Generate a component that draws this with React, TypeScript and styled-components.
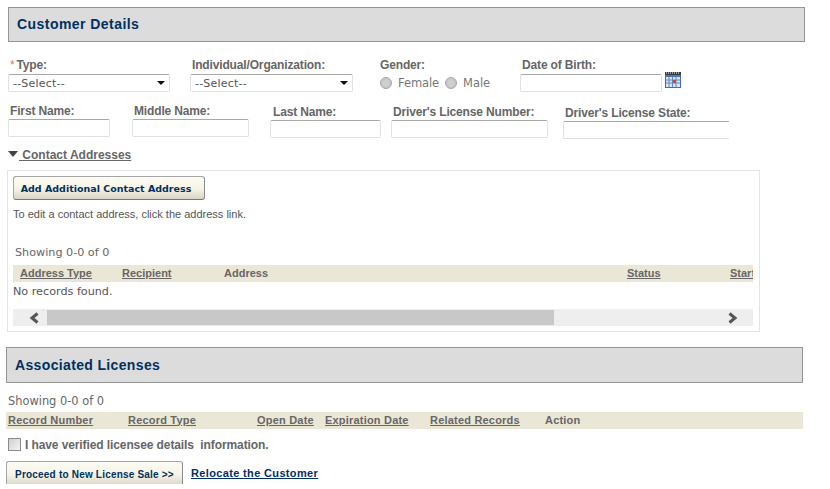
import styled, { createGlobalStyle } from "styled-components";

const GlobalStyle = createGlobalStyle`
  html, body {
    margin: 0;
    background: #fff;
    font-family: "Liberation Sans", Arial, sans-serif;
  }
`;

const Page = styled.div`
  width: 830px;
  height: 484px;
  overflow: hidden;
  padding-top: 7px;
  box-sizing: border-box;
`;

const SectionBar = styled.div<{ $left: number; $width: number; $height: number; $pad: number; $lift?: number }>`
  box-sizing: border-box;
  margin-left: ${(p) => p.$left}px;
  width: ${(p) => p.$width}px;
  height: ${(p) => p.$height}px;
  padding-left: ${(p) => p.$pad}px;
  padding-bottom: ${(p) => p.$lift ?? 0}px;
  display: flex;
  align-items: center;
  background: #dcdcdc;
  border: 1px solid #959595;
`;

const SectionTitle = styled.h2<{ $spacing: number }>`
  margin: 0;
  color: #00305f;
  font-size: 14px;
  font-weight: bold;
  letter-spacing: ${(p) => p.$spacing}px;
`;

const FieldRow = styled.div<{ $top: number; $height: number }>`
  display: flex;
  align-items: flex-start;
  margin-top: ${(p) => p.$top}px;
  height: ${(p) => p.$height}px;
  padding-left: 8px;
`;

const Field = styled.div<{ $width: number; $gap: number; $drop?: number }>`
  flex: none;
  width: ${(p) => p.$width}px;
  margin-right: ${(p) => p.$gap}px;
  padding-top: ${(p) => p.$drop ?? 0}px;
`;

const Label = styled.label<{ $indent?: number }>`
  display: block;
  height: 15px;
  line-height: 15px;
  margin-left: ${(p) => p.$indent ?? 1}px;
  color: #666;
  font-size: 12px;
  font-weight: bold;
  letter-spacing: -0.15px;
  white-space: nowrap;
`;

const Star = styled.span`
  color: #d9822b;
  font-weight: normal;
  margin-right: 2px;
`;

const SelectWrap = styled.div`
  position: relative;
  height: 18px;
  margin-top: 1px;
  &::after {
    content: "";
    position: absolute;
    right: 5px;
    top: 7px;
    border-left: 4px solid transparent;
    border-right: 4px solid transparent;
    border-top: 4px solid #111;
  }
`;

const Select = styled.select`
  appearance: none;
  box-sizing: border-box;
  display: block;
  width: 100%;
  height: 18px;
  margin: 0;
  padding: 0 0 0 4px;
  background: #fff;
  border: 1px solid #dfe1e8;
  border-top-color: #a9a9a9;
  border-radius: 2px;
  color: #555;
  font-family: "DejaVu Sans", Verdana, sans-serif;
  font-size: 11px;
  letter-spacing: 0.2px;
`;

const TextInput = styled.input`
  box-sizing: border-box;
  display: block;
  width: 100%;
  height: 18px;
  margin: 0;
  padding: 0;
  background: #fff;
  border: 1px solid #dfe1e8;
  border-top-color: #a9a9a9;
  border-radius: 2px;
`;

const ClippedInput = styled(TextInput)`
  border-right: 0;
  border-radius: 2px 0 0 2px;
`;

const RadioRow = styled.div`
  display: flex;
  align-items: center;
  height: 18px;
  margin-top: 1px;
  color: #777;
  font-family: "DejaVu Sans", Verdana, sans-serif;
  font-size: 11.5px;
  letter-spacing: -0.08px;
`;

const Radio = styled.input`
  appearance: none;
  flex: none;
  box-sizing: border-box;
  width: 12px;
  height: 12px;
  margin: 0 6px 0 0;
  border: 1px solid #a5a5a5;
  border-radius: 50%;
  background: radial-gradient(circle at 50% 55%, #cfcfcf 0 40%, #c4c4c4 60%, #f2f2f2 100%);
`;

const RadioText = styled.span`
  margin-right: 6px;
`;

const DateRow = styled.div`
  position: relative;
  width: 142px;
  margin-top: 1px;
`;

const CalendarIcon = styled.svg`
  position: absolute;
  left: 145px;
  top: -2px;
`;

const Toggle = styled.div`
  display: flex;
  align-items: center;
  height: 14px;
  margin-top: 8px;
  padding-left: 8px;
`;

const ToggleArrow = styled.span`
  width: 0;
  height: 0;
  border-left: 5px solid transparent;
  border-right: 5px solid transparent;
  border-top: 6px solid #444;
  margin-top: -2px;
`;

const ToggleLink = styled.a`
  margin-left: 1px;
  color: #666;
  font-size: 12px;
  font-weight: bold;
  text-decoration: underline;
  white-space: pre;
`;

const Panel = styled.div`
  box-sizing: border-box;
  width: 753px;
  height: 162px;
  margin: 8px 0 0 7px;
  padding: 5px 5px 0;
  border: 1px solid #e4e4e4;
`;

const RaisedButton = styled.button<{ $width: number; $height: number }>`
  display: block;
  box-sizing: border-box;
  width: ${(p) => p.$width}px;
  height: ${(p) => p.$height}px;
  margin: 0;
  padding: 0;
  background: linear-gradient(#fdfcf4 0%, #f6f3e5 55%, #d8d5c6 100%);
  border: 1px solid #a5a5a5;
  border-right-color: #8a8a8a;
  border-bottom-color: #777;
  border-radius: 3px;
  color: #00305f;
  font-family: "DejaVu Sans", Verdana, sans-serif;
  font-weight: bold;
  white-space: nowrap;
`;

const AddButton = styled(RaisedButton)`
  padding-right: 6px;
  font-size: 9.5px;
`;

const Hint = styled.p`
  margin: 8px 0 0;
  color: #555;
  font-size: 11px;
  line-height: 12px;
`;

const Showing = styled.div<{ $top: number; $left: number; $size: number }>`
  margin: ${(p) => p.$top}px 0 0 ${(p) => p.$left}px;
  height: 13px;
  line-height: 13px;
  color: #666;
  font-family: "DejaVu Sans", Verdana, sans-serif;
  font-size: ${(p) => p.$size}px;
`;

const HeaderRow = styled.div<{ $cols: string; $pad: number; $top: number; $width: number; $left: number; $spacing: number }>`
  display: grid;
  grid-template-columns: ${(p) => p.$cols};
  align-items: center;
  box-sizing: border-box;
  width: ${(p) => p.$width}px;
  height: 17px;
  margin: ${(p) => p.$top}px 0 0 ${(p) => p.$left}px;
  padding: 0 0 2px ${(p) => p.$pad}px;
  background: #ebe7d6;
  overflow: hidden;
  font-size: 11px;
  line-height: 14px;
  letter-spacing: ${(p) => p.$spacing}px;
`;

const SortLink = styled.a`
  color: #666;
  font-weight: bold;
  text-decoration: underline;
  white-space: nowrap;
`;

const PlainHead = styled.span`
  color: #666;
  font-weight: bold;
  white-space: nowrap;
`;

const EmptyRow = styled.div`
  margin-top: 3px;
  height: 14px;
  line-height: 14px;
  color: #555;
  font-family: "DejaVu Sans", Verdana, sans-serif;
  font-size: 11.2px;
`;

const ScrollTrack = styled.div`
  display: flex;
  align-items: center;
  width: 740px;
  height: 17px;
  margin-top: 10px;
  background: #eee;
`;

const ScrollButton = styled.div`
  flex: none;
  box-sizing: border-box;
  width: 34px;
  padding-left: 8px;
  display: flex;
  justify-content: center;
`;

const ScrollThumb = styled.div`
  flex: none;
  width: 507px;
  height: 15px;
  background: #c8c8c8;
`;

const ScrollSpacer = styled.div`
  flex: 1;
`;

const EndButton = styled.div`
  flex: none;
  box-sizing: border-box;
  width: 44px;
  padding-left: 2px;
  display: flex;
  justify-content: center;
`;

const LicensesBar = styled(SectionBar)`
  margin-top: 15px;
`;

const VerifyRow = styled.div`
  display: flex;
  align-items: center;
  margin: 8px 0 0 8px;
  height: 15px;
`;

const Checkbox = styled.input`
  appearance: none;
  flex: none;
  box-sizing: border-box;
  width: 13px;
  height: 13px;
  margin: 0 4px 0 0;
  border: 1px solid #8a8a8a;
  background: linear-gradient(135deg, #d0d0d0, #f4f4f4);
`;

const VerifyText = styled.label`
  color: #666;
  font-size: 12px;
  font-weight: bold;
  letter-spacing: -0.1px;
  white-space: pre;
`;

const ActionRow = styled.div`
  display: flex;
  align-items: flex-start;
  margin: 9px 0 0 6px;
`;

const ProceedButton = styled(RaisedButton)`
  font-family: "Liberation Sans", Arial, sans-serif;
  font-size: 10px;
  letter-spacing: 0.2px;
`;

const RelocateLink = styled.a`
  margin: 6px 0 0 8px;
  color: #00305f;
  font-size: 11px;
  font-weight: bold;
  letter-spacing: 0.35px;
  text-decoration: underline;
  white-space: nowrap;
`;

const addressCols = "102px 102px 403px 103px 40px";
const licenseCols = "120px 129px 68px 105px 115px 60px";

function Calendar() {
  return (
    <CalendarIcon width="16" height="16" viewBox="0 0 16 16">
      <rect x="0.5" y="1.5" width="15" height="14" fill="#dbe6f5" stroke="#3f6fae" />
      <rect x="0" y="0" width="16" height="3" fill="#3a3a3a" />
      <path d="M1 1h1M3 1h1M5 1h1M7 1h1M9 1h1M11 1h1M13 1h1" stroke="#fff" strokeWidth="1" />
      <rect x="1" y="3" width="14" height="2" fill="#3f78c4" />
      <path d="M1 8h14M1 11h14M4 5v10M7.5 5v10M11 5v10" stroke="#5d8ac4" strokeWidth="1" />
      <rect x="8" y="8" width="3" height="3" fill="#e2402a" />
    </CalendarIcon>
  );
}

function Chevron({ right }: { right?: boolean }) {
  return (
    <svg width="11" height="12" viewBox="0 0 11 12">
      <path d={right ? "M2.5 1.5L8 6l-5.5 4.5" : "M8.5 1.5L3 6l5.5 4.5"} fill="none" stroke="#555" strokeWidth="3" />
    </svg>
  );
}

export default function App() {
  return (
    <Page>
      <GlobalStyle />
      <SectionBar $left={8} $width={797} $height={35} $pad={8} $lift={1}>
        <SectionTitle $spacing={0.45}>Customer Details</SectionTitle>
      </SectionBar>

      <FieldRow $top={16} $height={35}>
        <Field $width={162} $gap={20}>
          <Label $indent={2}><Star>*</Star>Type:</Label>
          <SelectWrap>
            <Select defaultValue=""><option value="">--Select--</option></Select>
          </SelectWrap>
        </Field>
        <Field $width={163} $gap={27}>
          <Label $indent={2}>Individual/Organization:</Label>
          <SelectWrap>
            <Select defaultValue=""><option value="">--Select--</option></Select>
          </SelectWrap>
        </Field>
        <Field $width={140} $gap={0}>
          <Label $indent={0}>Gender:</Label>
          <RadioRow>
            <Radio type="radio" name="gender" />
            <RadioText>Female</RadioText>
            <Radio type="radio" name="gender" />
            <RadioText>Male</RadioText>
          </RadioRow>
        </Field>
        <Field $width={142} $gap={0}>
          <Label $indent={2}>Date of Birth:</Label>
          <DateRow>
            <TextInput type="text" />
            <Calendar />
          </DateRow>
        </Field>
      </FieldRow>

      <FieldRow $top={11} $height={36}>
        <Field $width={102} $gap={22}>
          <Label $indent={2}>First Name:</Label>
          <TextInput type="text" />
        </Field>
        <Field $width={117} $gap={21}>
          <Label $indent={2}>Middle Name:</Label>
          <TextInput type="text" />
        </Field>
        <Field $width={111} $gap={10} $drop={1}>
          <Label $indent={3}>Last Name:</Label>
          <TextInput type="text" />
        </Field>
        <Field $width={157} $gap={15} $drop={1}>
          <Label $indent={2}>Driver's License Number:</Label>
          <TextInput type="text" />
        </Field>
        <Field $width={166} $gap={0} $drop={2}>
          <Label $indent={2}>Driver's License State:</Label>
          <ClippedInput type="text" />
        </Field>
      </FieldRow>

      <Toggle>
        <ToggleArrow />
        <ToggleLink> Contact Addresses</ToggleLink>
      </Toggle>

      <Panel>
        <AddButton $width={192} $height={24}>Add Additional Contact Address</AddButton>
        <Hint>To edit a contact address, click the address link.</Hint>
        <Showing $top={26} $left={2} $size={11.2}>Showing 0-0 of 0</Showing>
        <HeaderRow $cols={addressCols} $pad={7} $top={6} $width={740} $left={0} $spacing={0}>
          <div><SortLink>Address Type</SortLink></div>
          <div><SortLink>Recipient</SortLink></div>
          <PlainHead>Address</PlainHead>
          <div><SortLink>Status</SortLink></div>
          <div><SortLink>Start</SortLink></div>
        </HeaderRow>
        <EmptyRow>No records found.</EmptyRow>
        <ScrollTrack>
          <ScrollButton><Chevron /></ScrollButton>
          <ScrollThumb />
          <ScrollSpacer />
          <EndButton><Chevron right /></EndButton>
        </ScrollTrack>
      </Panel>

      <LicensesBar $left={6} $width={797} $height={36} $pad={8}>
        <SectionTitle $spacing={0.35}>Associated Licenses</SectionTitle>
      </LicensesBar>

      <Showing $top={12} $left={8} $size={11.4}>Showing 0-0 of 0</Showing>
      <HeaderRow $cols={licenseCols} $pad={2} $top={4} $width={797} $left={6} $spacing={0.2}>
        <div><SortLink>Record Number</SortLink></div>
        <div><SortLink>Record Type</SortLink></div>
        <div><SortLink>Open Date</SortLink></div>
        <div><SortLink>Expiration Date</SortLink></div>
        <div><SortLink>Related Records</SortLink></div>
        <PlainHead>Action</PlainHead>
      </HeaderRow>

      <VerifyRow>
        <Checkbox type="checkbox" />
        <VerifyText>I have verified licensee details  information.</VerifyText>
      </VerifyRow>

      <ActionRow>
        <ProceedButton $width={177} $height={26}>Proceed to New License Sale &gt;&gt;</ProceedButton>
        <RelocateLink>Relocate the Customer</RelocateLink>
      </ActionRow>
    </Page>
  );
}
